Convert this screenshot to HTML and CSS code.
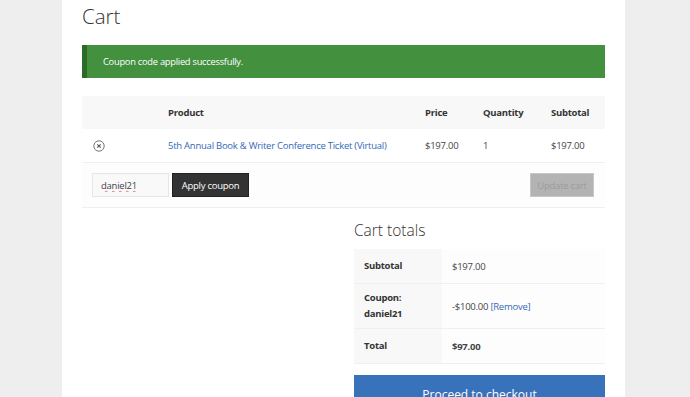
FILE: index.html
```html
<!DOCTYPE html>
<html lang="en">
<head>
    <meta charset="UTF-8">
    <meta name="viewport" content="width=device-width, initial-scale=1.0">
    <title>Cart</title>
    <link rel="stylesheet" href="styles.css">
</head>
<body>

    <div class="page">
        <h1>Cart</h1>

        <div class="notice">Coupon code applied successfully.</div>

        <table class="cart-table">
            <colgroup>
                <col class="col-remove">
                <col class="col-product">
                <col class="col-price">
                <col class="col-qty">
                <col class="col-subtotal">
            </colgroup>
            <thead>
                <tr>
                    <th></th>
                    <th>Product</th>
                    <th>Price</th>
                    <th>Quantity</th>
                    <th>Subtotal</th>
                </tr>
            </thead>
            <tbody>
                <tr class="item-row">
                    <td class="remove-cell">
                        <!-- кнопка удаления -->
                        <svg class="remove-icon" width="12" height="12" viewBox="0 0 12 12">
                            <circle cx="6" cy="6" r="5.2" fill="none" stroke="#666" stroke-width="0.9"/>
                            <path d="M4.3 4.3 L7.7 7.7 M7.7 4.3 L4.3 7.7" stroke="#555" stroke-width="1.1"/>
                        </svg>
                    </td>
                    <td><a href="#" class="link">5th Annual Book &amp; Writer Conference Ticket (Virtual)</a></td>
                    <td>$197.00</td>
                    <td class="qty">1</td>
                    <td>$197.00</td>
                </tr>
                <tr class="actions-row">
                    <td colspan="5">
                        <div class="actions">
                            <div class="coupon">
                                <input type="text" class="coupon-input" value="daniel21">
                                <button class="apply-btn">Apply coupon</button>
                            </div>
                            <button class="update-btn" disabled>Update cart</button>
                        </div>
                    </td>
                </tr>
            </tbody>
        </table>

        <div class="totals-wrap">
            <div class="totals">
                <h2>Cart totals</h2>
                <table class="totals-table">
                    <tr>
                        <th>Subtotal</th>
                        <td>$197.00</td>
                    </tr>
                    <tr class="coupon-row">
                        <th>Coupon:<br>daniel21</th>
                        <td>-$100.00 <a href="#" class="link">[Remove]</a></td>
                    </tr>
                    <tr>
                        <th>Total</th>
                        <td><strong>$97.00</strong></td>
                    </tr>
                </table>
                <a href="#" class="checkout-btn">Proceed to checkout</a>
            </div>
        </div>
    </div>

</body>
</html>
```

FILE: styles.css
```css
body {
    margin: 0;
    background-color: #eeeeee;
    font-family: 'Open Sans', sans-serif;
    color: #43454b;
    font-size: 9.5px;
    letter-spacing: -0.25px;
}

.page {
    width: 563px;
    margin-left: 62px;
    min-height: 100vh;
    background-color: #fff;
    padding: 0 20px;
    box-sizing: border-box;
    overflow: hidden;
}

h1 {
    font-size: 20.5px;
    font-weight: 300;
    line-height: 32px;
    margin: 0 0 13px 0;
    color: #333;
    letter-spacing: 0;
}

/* Зелёное уведомление */
.notice {
    height: 33px;
    line-height: 33px;
    background-color: #43903f;
    border-left: 5px solid #2c6a29;
    color: #fff;
    padding-left: 16px;
    font-size: 9.3px;
}

.cart-table {
    width: 100%;
    margin-top: 18px;
    border-collapse: collapse;
    table-layout: fixed;
}

.col-remove { width: 70px; }
.col-price { width: 58px; }
.col-qty { width: 68px; }
.col-subtotal { width: 70px; }

.cart-table th {
    background-color: #f8f8f8;
    height: 33px;
    text-align: left;
    padding: 0 16px;
    font-weight: 700;
    color: #333;
}

.cart-table td {
    height: 33px;
    padding: 0 16px;
    border-bottom: 1px solid #f0f0f0;
    white-space: nowrap;
}

.cart-table .qty {
    color: #43454b;
}

.remove-icon {
    display: block;
    margin-left: -5px;
}

.link {
    color: #3468b7;
    text-decoration: none;
}

.actions-row td {
    height: 44px;
    padding: 0 11px 0 10px;
    background-color: #fdfdfd;
}

.actions {
    display: flex;
    justify-content: space-between;
    align-items: center;
}

.coupon {
    display: flex;
    gap: 3px;
}

.coupon-input {
    width: 77px;
    height: 24px;
    box-sizing: border-box;
    border: 1px solid #e6e6e6;
    background-color: #f9f9f9;
    padding: 0 8px;
    font-family: 'Open Sans', sans-serif;
    font-size: 9.5px;
    letter-spacing: -0.25px;
    color: #43454b;
    text-decoration: underline wavy #e07b7b;
    text-decoration-thickness: 1px;
}

.apply-btn {
    height: 24px;
    width: 77px;
    background-color: #333;
    border: 1px solid #222;
    color: #fff;
    font-family: 'Open Sans', sans-serif;
    font-size: 9.5px;
    letter-spacing: -0.25px;
    padding: 0;
}

.update-btn {
    height: 24px;
    width: 64px;
    background-color: #b3b3b3;
    border: 1px solid #c7c7c7;
    color: #9c9c9c;
    font-family: 'Open Sans', sans-serif;
    font-size: 9.5px;
    letter-spacing: -0.25px;
    padding: 0;
}

/* Итоги */
.totals-wrap {
    display: flex;
    justify-content: flex-end;
}

.totals {
    width: 251px;
}

.totals h2 {
    font-size: 15.5px;
    font-weight: 300;
    color: #333;
    margin: 7px 0 0 0;
    line-height: 31px;
    letter-spacing: 0;
}

.totals-table {
    width: 100%;
    border-collapse: collapse;
    margin-top: 3px;
}

.totals-table th {
    width: 68px;
    text-align: left;
    background-color: #f8f8f8;
    padding: 0 10px;
    height: 34px;
    font-weight: 700;
    color: #333;
    line-height: 16px;
    border-bottom: 1px solid #f0f0f0;
}

.totals-table td {
    padding: 0 10px;
    height: 34px;
    background-color: #fdfdfd;
    border-bottom: 1px solid #f0f0f0;
}

.totals-table .coupon-row th,
.totals-table .coupon-row td {
    height: 44px;
}

.checkout-btn {
    display: block;
    margin-top: 11px;
    height: 40px;
    line-height: 40px;
    background-color: #3872bb;
    color: #fff;
    text-align: center;
    text-decoration: none;
    font-size: 12px;
    letter-spacing: 0;
}
```
